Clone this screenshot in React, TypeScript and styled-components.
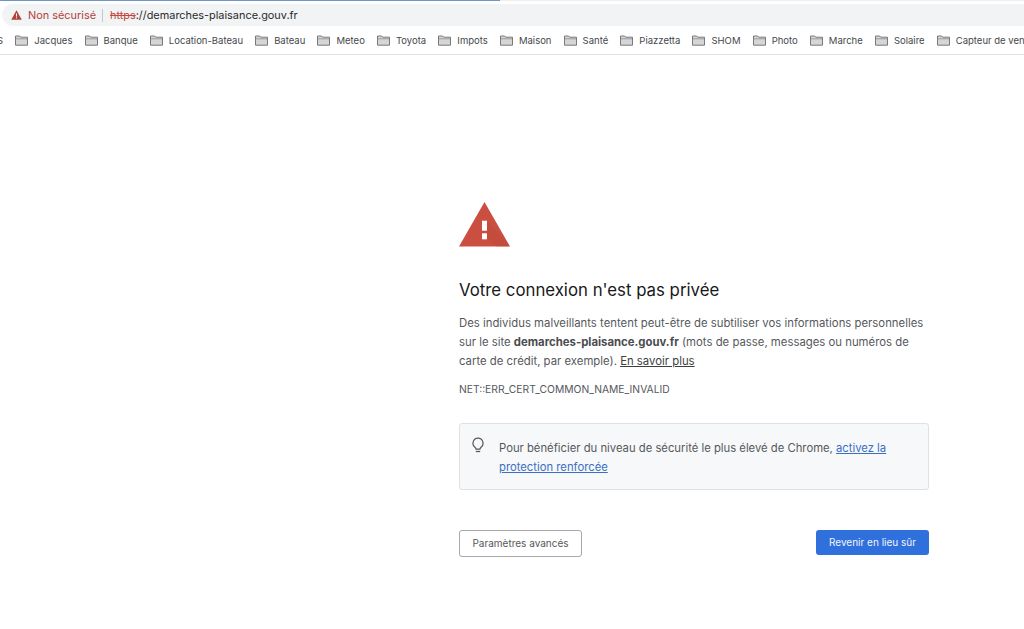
import React from "react";
import styled, { createGlobalStyle } from "styled-components";

const Global = createGlobalStyle`
  html, body { margin: 0; padding: 0; background: #fff; }
  body { font-family: Inter, "Liberation Sans", Arial, sans-serif; width: 1024px; height: 629px; overflow: hidden; }
`;

const Page = styled.div`
  display: flex;
  flex-direction: column;
  width: 1024px;
  height: 629px;
  overflow: hidden;
`;
const Progress = styled.div`
  height: 1px;
  background: linear-gradient(to right, #6f94c6 0 500px, #eceef0 500px);
`;
const Toolbar = styled.div`
  padding: 3px 0 0 2px;
`;
const Omnibox = styled.div`
  display: flex;
  align-items: center;
  height: 22px;
  background: #f1f3f4;
  border-radius: 11px 0 0 11px;
  padding-left: 9px;
  font-size: 10.9px;
`;
const NotSecure = styled.span`
  margin-left: 6px;
  color: #b3433a;
`;
const Divider = styled.span`
  width: 1px;
  height: 13px;
  background: #c4c6c9;
  margin: 0 7px 0 6px;
`;
const Scheme = styled.span`
  color: #c5463c;
  text-decoration: line-through;
`;
const Host = styled.span`
  color: #2a2b2d;
`;
const Bookmarks = styled.div`
  display: flex;
  align-items: center;
  gap: 12.15px;
  height: 28px;
  margin-left: -22px;
  border-bottom: 1px solid #e2e3e5;
  white-space: nowrap;
  overflow: hidden;
`;
const Bookmark = styled.div`
  display: flex;
  align-items: center;
  gap: 6px;
  flex: none;
  font-size: 9.5px;
  color: #45484c;
`;
const Main = styled.main`
  padding: 147px 0 0 459px;
  flex: 1;
`;
const Column = styled.div`
  width: 470px;
`;
const WarningIcon = styled.svg`
  display: block;
  width: 51px;
  height: 45px;
`;
const Heading = styled.h1`
  margin: 31px 0 0;
  font-size: 16.8px;
  line-height: 24px;
  font-weight: 400;
  color: #17181a;
`;
const Paragraph = styled.p`
  margin: 12px 0 0;
  font-size: 11.35px;
  line-height: 19px;
  color: #55585c;
`;
const Strong = styled.b`
  font-weight: 700;
  color: #4a4c50;
`;
const LearnMore = styled.a`
  color: #3c3e41;
  text-decoration: underline;
`;
const ErrorCode = styled.div`
  margin-top: 11px;
  font-size: 10.3px;
  line-height: 14px;
  color: #55585c;
`;
const Notice = styled.div`
  display: flex;
  gap: 14px;
  box-sizing: border-box;
  height: 67px;
  margin-top: 27px;
  padding: 15px 12px 0 11px;
  background: #f7f8fa;
  border: 1px solid #dfe1e4;
  border-radius: 3px;
  font-size: 11.27px;
  line-height: 19px;
  color: #55585c;
`;
const NoticeIcon = styled.svg`
  flex: none;
  width: 14px;
  height: 18px;
  margin-top: -2px;
`;
const BlueLink = styled.a`
  color: #3b6fc4;
  text-decoration: underline;
`;
const Actions = styled.div`
  display: flex;
  justify-content: space-between;
  align-items: flex-start;
  margin-top: 40px;
`;
const SecondaryButton = styled.button`
  box-sizing: border-box;
  height: 27px;
  width: 123px;
  padding: 0 0 1px;
  background: #fff;
  border: 1px solid #a6a8ab;
  border-radius: 3px;
  font: 10px Inter, "Liberation Sans", sans-serif;
  color: #55585c;
`;
const PrimaryButton = styled.button`
  box-sizing: border-box;
  height: 25px;
  width: 113px;
  padding: 0 0 1px;
  background: #3070dc;
  border: none;
  border-radius: 3px;
  font: 10px Inter, "Liberation Sans", sans-serif;
  color: #f3f6fc;
`;

const Folder = () => (
  <svg width="13" height="11" viewBox="0 0 13 11">
    <path d="M.5 1h4.2l1 1.2h6.8v8H.5z" fill="#d6d6d6" stroke="#77797c" strokeWidth="1" />
    <path d="M1 3.8h11" stroke="#8a8c8f" strokeWidth="0.8" />
  </svg>
);

const names = ["S", "Jacques", "Banque", "Location-Bateau", "Bateau", "Meteo", "Toyota", "Impots", "Maison", "Santé", "Piazzetta", "SHOM", "Photo", "Marche", "Solaire", "Capteur de vent"];

export default function App() {
  return (
    <Page>
      <Global />
      <Progress />
      <Toolbar>
        <Omnibox>
          <svg width="11" height="10" viewBox="0 0 11 10">
            <path d="M5.5 0.3 L10.8 9.7 H0.2 Z" fill="#b3433a" />
            <rect x="5" y="3.4" width="1" height="3.2" fill="#f1f3f4" />
            <rect x="5" y="7.3" width="1" height="1.1" fill="#f1f3f4" />
          </svg>
          <NotSecure>Non sécurisé</NotSecure>
          <Divider />
          <Scheme>https</Scheme>
          <Host>://demarches-plaisance.gouv.fr</Host>
        </Omnibox>
      </Toolbar>
      <Bookmarks>
        {names.map((n) => (
          <Bookmark key={n}>
            <Folder />
            {n}
          </Bookmark>
        ))}
      </Bookmarks>
      <Main>
        <Column>
          <WarningIcon viewBox="0 0 51 45">
            <path d="M25.5 0 L51 44.5 H0 Z" fill="#cb4f40" />
            <path d="M28 19 L51 44.5 H38 L28 37 Z" fill="#b8483a" opacity="0.35" />
            <rect x="23" y="18.7" width="5" height="10" fill="#fff" />
            <rect x="23" y="31.3" width="5" height="6" fill="#fff" />
          </WarningIcon>
          <Heading>Votre connexion n'est pas privée</Heading>
          <Paragraph>
            Des individus malveillants tentent peut-être de subtiliser vos informations personnelles sur le site{" "}
            <Strong>demarches-plaisance.gouv.fr</Strong> (mots de passe, messages ou numéros de carte de crédit, par exemple).{" "}
            <LearnMore>En savoir plus</LearnMore>
          </Paragraph>
          <ErrorCode>NET::ERR_CERT_COMMON_NAME_INVALID</ErrorCode>
          <Notice>
            <NoticeIcon viewBox="0 0 14 18">
              <path d="M7 1.2a5 5 0 0 0-3 9c.7.6 1 1.2 1 2h4c0-.8.3-1.4 1-2a5 5 0 0 0-3-9z" fill="none" stroke="#55585c" strokeWidth="1.2" />
              <path d="M4.8 14.5h4.4" stroke="#55585c" strokeWidth="1.3" />
            </NoticeIcon>
            <div>
              Pour bénéficier du niveau de sécurité le plus élevé de Chrome,{" "}
              <BlueLink>activez la protection renforcée</BlueLink>
            </div>
          </Notice>
          <Actions>
            <SecondaryButton>Paramètres avancés</SecondaryButton>
            <PrimaryButton>Revenir en lieu sûr</PrimaryButton>
          </Actions>
        </Column>
      </Main>
    </Page>
  );
}
